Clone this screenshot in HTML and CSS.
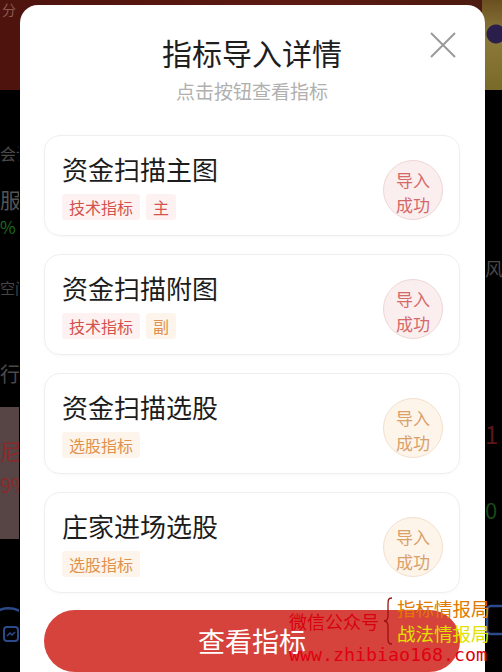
FILE: index.html
```html
<!DOCTYPE html>
<html lang="zh">
<head>
<meta charset="utf-8">
<title>指标导入详情</title>
<link rel="stylesheet" href="styles.css">
</head>
<body>
<div class="app">
  <div class="banner"><span class="banner-txt">分</span><span class="banner-img"></span></div>
  <div class="app-body">
    <div class="col-left">
      <div class="bl bl-1">会计</div>
      <div class="bl bl-2">服务</div>
      <div class="bl bl-3">%</div>
      <div class="bl bl-4">空间</div>
      <div class="bl bl-5">行业</div>
      <div class="bl-block">
        <div class="bl bl-6">尼</div>
        <div class="bl bl-7">9%</div>
      </div>
      <svg class="bl-icon" width="24" height="50" viewBox="0 0 24 50"><path d="M-14 22 A 24 22 0 0 1 20 10" fill="none" stroke="#2c4a8a" stroke-width="2.5"/><rect x="4" y="26" width="14" height="14" rx="3" fill="none" stroke="#2c4a8a" stroke-width="2"/><path d="M7 35 l3 -3 l2 2 l3 -3" fill="none" stroke="#2c4a8a" stroke-width="1.5"/></svg>
    </div>
    <div class="col-right">
      <div class="br br-1">风险</div>
      <div class="br br-2">1</div>
      <div class="br br-3">0</div>
      <svg class="br-icon" width="20" height="36" viewBox="0 0 20 36"><rect x="2" y="4" width="24" height="28" rx="4" fill="none" stroke="#2c4a8a" stroke-width="2.5"/></svg>
    </div>
  </div>
</div>

<div class="modal">
  <div class="modal-head">
    <h1 class="modal-title">指标导入详情</h1>
    <p class="modal-sub">点击按钮查看指标</p>
    <button class="modal-close" aria-label="关闭">
      <svg width="26" height="26" viewBox="0 0 26 26"><path d="M1 1 L25 25 M25 1 L1 25" stroke="#9a9a9a" stroke-width="2" fill="none"/></svg>
    </button>
  </div>

  <div class="cards">
    <div class="card">
      <div class="card-main">
        <div class="card-title">资金扫描主图</div>
        <div class="tags"><span class="tag tag-red">技术指标</span><span class="tag tag-red">主</span></div>
      </div>
      <div class="badge badge-red">导入<br>成功</div>
    </div>
    <div class="card">
      <div class="card-main">
        <div class="card-title">资金扫描附图</div>
        <div class="tags"><span class="tag tag-red">技术指标</span><span class="tag tag-orange">副</span></div>
      </div>
      <div class="badge badge-red">导入<br>成功</div>
    </div>
    <div class="card">
      <div class="card-main">
        <div class="card-title">资金扫描选股</div>
        <div class="tags"><span class="tag tag-orange">选股指标</span></div>
      </div>
      <div class="badge badge-orange">导入<br>成功</div>
    </div>
    <div class="card">
      <div class="card-main">
        <div class="card-title">庄家进场选股</div>
        <div class="tags"><span class="tag tag-orange">选股指标</span></div>
      </div>
      <div class="badge badge-orange">导入<br>成功</div>
    </div>
  </div>

  <button class="view-btn">查看指标</button>
</div>

<div class="watermark">
  <div class="wm-top">
    <span class="wm-wx">微信公众号</span>
    <svg class="wm-brace" width="10" height="48" viewBox="0 0 10 48"><path d="M9 1 C5 1 5 3 5 8 L5 19 C5 22 4 24 1 24 C4 24 5 26 5 29 L5 40 C5 45 5 47 9 47" fill="none" stroke="#9a1010" stroke-width="1.3"/></svg>
    <div class="wm-names">
      <span class="wm-n1">指标情报局</span>
      <span class="wm-n2">战法情报局</span>
    </div>
  </div>
  <div class="wm-url">www.zhibiao168.com</div>
</div>
</body>
</html>
```

FILE: styles.css
```css
* { box-sizing: border-box; }
html, body {
  margin: 0;
  padding: 0;
  width: 502px;
  height: 672px;
  overflow: hidden;
  background: #000;
  font-family: "Noto Sans CJK SC", "Noto Sans", sans-serif;
}

/* background app (dimmed) */
.app { width: 502px; height: 672px; }
.banner {
  height: 90px;
  display: flex;
  justify-content: space-between;
  background: linear-gradient(90deg, #4e130d 0%, #5c1a12 60%, #4a1b10 100%);
}
.banner-txt { color: #8a5a50; font-size: 14px; line-height: 14px; padding: 2px 0 0 2px; }
.banner-img {
  width: 20px;
  background: radial-gradient(circle at 14px 34px, #2a1f4a 0 9px, transparent 10px),
              linear-gradient(180deg, #6a5020 0%, #8c7a3a 40%, #7a6a2a 100%);
}
.app-body { display: flex; justify-content: space-between; }
.col-left { width: 19px; overflow: hidden; white-space: nowrap; }
.col-right { width: 17px; overflow: hidden; white-space: nowrap; }
.bl, .br { display: block; }
.bl-1 { margin-top: 55px; font-size: 16px; line-height: 16px; color: #4a4a4a; }
.bl-2 { margin-top: 28px; font-size: 21px; line-height: 21px; color: #555; }
.bl-3 { margin-top: 8px; font-size: 17px; line-height: 17px; color: #1f6a1f; }
.bl-4 { margin-top: 45px; font-size: 15px; line-height: 15px; color: #444; }
.bl-5 { margin-top: 69px; font-size: 20px; line-height: 20px; color: #4a4a4a; }
.bl-block { margin-top: 23px; height: 132px; padding-top: 32px; background: #574545; }
.bl-6 { font-size: 22px; line-height: 22px; color: #8a2a2a; }
.bl-7 { margin-top: 14px; font-size: 20px; line-height: 20px; color: #8a2a2a; }
.bl-icon { display: block; margin-top: 62px; }
.br-1 { margin-top: 169px; font-size: 18px; line-height: 18px; color: #4a4a4a; }
.br-2 { margin-top: 145px; font-size: 24px; line-height: 24px; color: #5e1616; }
.br-3 { margin-top: 52px; font-size: 22px; line-height: 22px; color: #174a17; }
.br-icon { display: block; margin-top: 82px; }

/* modal */
.modal {
  position: absolute;
  top: 5px;
  left: 20px;
  width: 465px;
  height: 720px;
  background: #fff;
  border-radius: 18px;
  padding: 27px 25px 0 24px;
}
.modal-head { position: relative; text-align: center; }
.modal-title {
  margin: 0;
  font-size: 30px;
  line-height: 40px;
  font-weight: 400;
  color: #1e1e1e;
}
.modal-sub {
  margin: 5px 0 0;
  font-size: 19px;
  line-height: 28px;
  color: #b0b0b0;
}
.modal-close {
  position: absolute;
  top: 0;
  right: 4px;
  width: 26px;
  height: 26px;
  padding: 0;
  border: 0;
  background: none;
}
.modal-close svg { display: block; }

.cards {
  margin-top: 30px;
  display: flex;
  flex-direction: column;
  gap: 18px;
}
.card {
  height: 101px;
  display: flex;
  align-items: center;
  border: 1px solid #efefef;
  border-radius: 16px;
  padding: 15px 16px 15px 17px;
  box-shadow: 0 1px 3px rgba(0,0,0,0.03);
}
.card-main { flex: 1; }
.card-title {
  font-size: 26px;
  line-height: 34px;
  color: #1c1c1c;
}
.tags { display: flex; gap: 6px; margin-top: 8px; }
.tag {
  height: 26px;
  padding: 0 7px;
  font-size: 16px;
  line-height: 26px;
  border-radius: 3px;
}
.tag-red { color: #d4524c; background: #fdf2f1; }
.tag-orange { color: #e0914c; background: #fdf5eb; }

.badge {
  width: 60px;
  height: 60px;
  margin-top: 9px;
  border-radius: 50%;
  text-align: center;
  font-size: 17px;
  line-height: 25px;
  padding-top: 6px;
}
.badge-red { background: #fbeeee; border: 1px solid #efd6d6; color: #d56868; }
.badge-orange { background: #fdf4ea; border: 1px solid #f2e0cc; color: #d9a06a; }

.view-btn {
  display: block;
  width: 100%;
  height: 62px;
  margin-top: 17px;
  border: 0;
  border-radius: 31px;
  background: #d6433c;
  color: #fff;
  font-family: inherit;
  font-size: 27px;
  line-height: 62px;
  padding: 0;
}

/* watermark overlay */
.watermark {
  position: absolute;
  left: 289px;
  top: 596px;
  width: 210px;
}
.wm-top { display: flex; align-items: center; }
.wm-wx { font-size: 18px; line-height: 22px; color: #d80010; }
.wm-brace { display: block; margin: 0 4px 0 4px; }
.wm-names { display: flex; flex-direction: column; }
.wm-n1, .wm-n2 { font-size: 18.5px; line-height: 25px; }
.wm-n1 { color: #e07a00; }
.wm-n2 { color: #e2e000; }
.wm-url {
  font-family: "DejaVu Sans Mono", "Liberation Mono", monospace;
  font-size: 18.3px;
  line-height: 20px;
  color: #e00010;
  margin-top: -1px;
}
```
